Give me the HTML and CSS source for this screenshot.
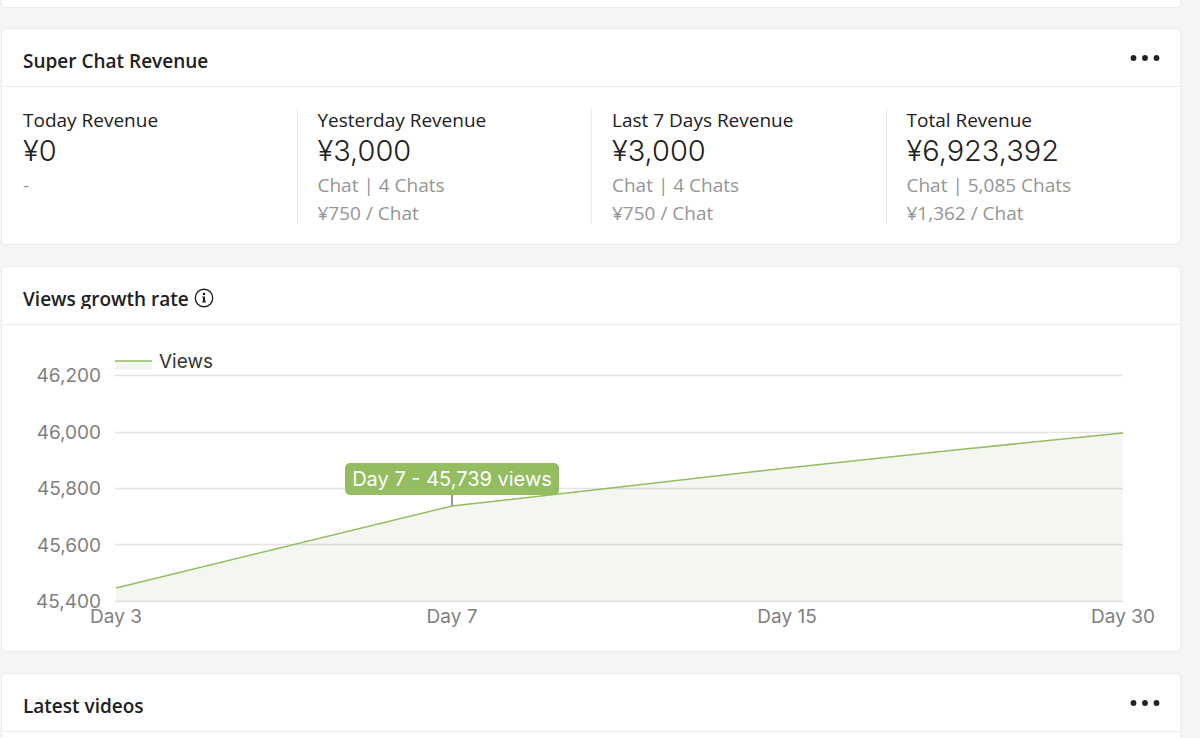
FILE: index.html
```
<!DOCTYPE html>
<html lang="en">
<head>
    <meta charset="UTF-8">
    <meta name="viewport" content="width=device-width, initial-scale=1.0">
    <title>Channel Dashboard</title>
    <link rel="stylesheet" href="styles.css">
</head>
<body>
    <main class="dashboard">
        <section class="card card-previous"></section>

        <section class="card">
            <header class="card-header">
                <h2 class="card-title">Super Chat Revenue</h2>
                <button class="more-button" type="button" aria-label="More">
                    <svg width="30" height="6" viewBox="0 0 30 6">
                        <circle cx="3.5" cy="3" r="2.9"/>
                        <circle cx="15" cy="3" r="2.9"/>
                        <circle cx="26.5" cy="3" r="2.9"/>
                    </svg>
                </button>
            </header>
            <div class="revenue">
                <div class="revenue-item">
                    <h3>Today Revenue</h3>
                    <p class="revenue-value">¥0</p>
                    <p class="revenue-detail">-</p>
                </div>
                <div class="revenue-item">
                    <h3>Yesterday Revenue</h3>
                    <p class="revenue-value">¥3,000</p>
                    <p class="revenue-detail">Chat | 4 Chats</p>
                    <p class="revenue-detail">¥750 / Chat</p>
                </div>
                <div class="revenue-item">
                    <h3>Last 7 Days Revenue</h3>
                    <p class="revenue-value">¥3,000</p>
                    <p class="revenue-detail">Chat | 4 Chats</p>
                    <p class="revenue-detail">¥750 / Chat</p>
                </div>
                <div class="revenue-item">
                    <h3>Total Revenue</h3>
                    <p class="revenue-value">¥6,923,392</p>
                    <p class="revenue-detail">Chat | 5,085 Chats</p>
                    <p class="revenue-detail">¥1,362 / Chat</p>
                </div>
            </div>
        </section>

        <section class="card">
            <header class="card-header">
                <h2 class="card-title">Views growth rate</h2>
                <svg class="info-icon" width="20" height="20" viewBox="0 0 20 20">
                    <circle cx="10" cy="10" r="8.7" fill="none" stroke="#222" stroke-width="1.4"/>
                    <circle cx="10" cy="6" r="1.3"/>
                    <path d="M8.2 8.4h2.9v5h.9v1.1H8.1v-1.1H9V9.5h-.8z"/>
                </svg>
            </header>
            <svg class="chart" viewBox="0 0 1178 326" role="img" aria-label="Views growth rate">
                <!-- grid -->
                <g class="chart-grid">
                    <path d="M113 50.5H1121"/>
                    <path d="M113 107.5H1121"/>
                    <path d="M113 163.5H1121"/>
                    <path d="M113 219.5H1121"/>
                    <path d="M113 276.5H1121"/>
                </g>
                <g class="chart-label chart-label-y">
                    <text x="99" y="57">46,200</text>
                    <text x="99" y="114">46,000</text>
                    <text x="99" y="170">45,800</text>
                    <text x="99" y="227">45,600</text>
                    <text x="99" y="283">45,400</text>
                </g>
                <g class="chart-label chart-label-x">
                    <text x="114" y="298">Day 3</text>
                    <text x="450" y="298">Day 7</text>
                    <text x="785" y="298">Day 15</text>
                    <text x="1121" y="298">Day 30</text>
                </g>

                <!-- series -->
                <path class="chart-area" d="M114 263L450 181L785 143L953 125L1121 108V277H114Z"/>
                <path class="chart-line" d="M114 263L450 181L785 143L953 125L1121 108"/>

                <!-- legend -->
                <rect class="chart-area" x="113" y="36" width="37" height="9"/>
                <path class="chart-line" d="M113 36H150"/>
                <text class="chart-legend" x="157" y="43">Views</text>

                <!-- annotation -->
                <path class="chart-marker" d="M450 170V181"/>
                <rect class="chart-tooltip" x="343" y="138" width="214" height="32" rx="5"/>
                <text class="chart-tooltip-text" x="450" y="161">Day 7 - 45,739 views</text>
            </svg>
        </section>

        <section class="card card-latest">
            <header class="card-header">
                <h2 class="card-title">Latest videos</h2>
                <button class="more-button" type="button" aria-label="More">
                    <svg width="30" height="6" viewBox="0 0 30 6">
                        <circle cx="3.5" cy="3" r="2.9"/>
                        <circle cx="15" cy="3" r="2.9"/>
                        <circle cx="26.5" cy="3" r="2.9"/>
                    </svg>
                </button>
            </header>
        </section>
    </main>
</body>
</html>
```
FILE: styles.css
```
* {
    box-sizing: border-box;
}
body {
    margin: 0;
    height: 100vh;
    overflow: hidden;
    background-color: #f5f5f5;
    color: #212121;
    font-family: "Open Sans", "Noto Sans", sans-serif;
    font-size: 19px;
}
h2, h3, p {
    margin: 0;
    font-size: inherit;
    font-weight: normal;
}
.dashboard {
    display: flex;
    flex-direction: column;
    gap: 21px;
    padding: 0 19px 0 1px;
}
.card {
    background-color: #fff;
    border: 1px solid #ebebeb;
    border-radius: 4px;
}
.card-previous {
    height: 8px;
    border-top: none;
    border-radius: 0 0 4px 4px;
    margin-bottom: -1px;
}
.card-latest {
    min-height: 90px;
}
.card-header {
    display: flex;
    align-items: center;
    height: 58px;
    padding: 0 20px 0 21px;
    border-bottom: 1px solid #ebebeb;
}
.card-title {
    margin-top: 6px;
    line-height: 20px;
    overflow: hidden;
    font-weight: 600;
}
.more-button {
    display: flex;
    margin-left: auto;
    padding: 0;
    border: none;
    background: none;
    cursor: pointer;
}
.more-button svg, .info-icon {
    fill: #222;
}
.info-icon {
    margin-top: 4px;
    margin-left: 5px;
}
.revenue {
    display: grid;
    grid-template-columns: repeat(4, 1fr);
    padding: 21px 0 20px;
}
.revenue-item {
    min-height: 116px;
    padding: 0 21px;
}
.revenue-item + .revenue-item {
    padding-left: 20px;
    border-left: 1px solid #ebebeb;
}
.revenue-item h3 {
    line-height: 24px;
}
.revenue-value {
    margin-bottom: 4px;
    font-family: Inter, sans-serif;
    font-size: 29px;
    font-weight: 300;
    line-height: 38px;
}
.revenue-detail {
    color: #959595;
    line-height: 22px;
}
.revenue-detail + .revenue-detail {
    margin-top: 6px;
}
.chart {
    display: block;
    width: 100%;
    font-family: Inter, sans-serif;
    font-size: 19px;
}
.chart-grid {
    stroke: #e4e4e4;
    stroke-width: 1.5;
}
.chart-label {
    fill: #808080;
}
.chart-label-y {
    text-anchor: end;
}
.chart-label-x {
    text-anchor: middle;
}
.chart-area {
    fill: #8cae64;
    fill-opacity: 0.1;
}
.chart-line {
    fill: none;
    stroke: #93bd60;
    stroke-width: 1.5;
}
.chart-legend {
    fill: #333;
}
.chart-marker {
    stroke: #999;
    stroke-width: 2;
}
.chart-tooltip {
    fill: #93bd60;
}
.chart-tooltip-text {
    fill: #fff;
    font-size: 20px;
    text-anchor: middle;
}
```
